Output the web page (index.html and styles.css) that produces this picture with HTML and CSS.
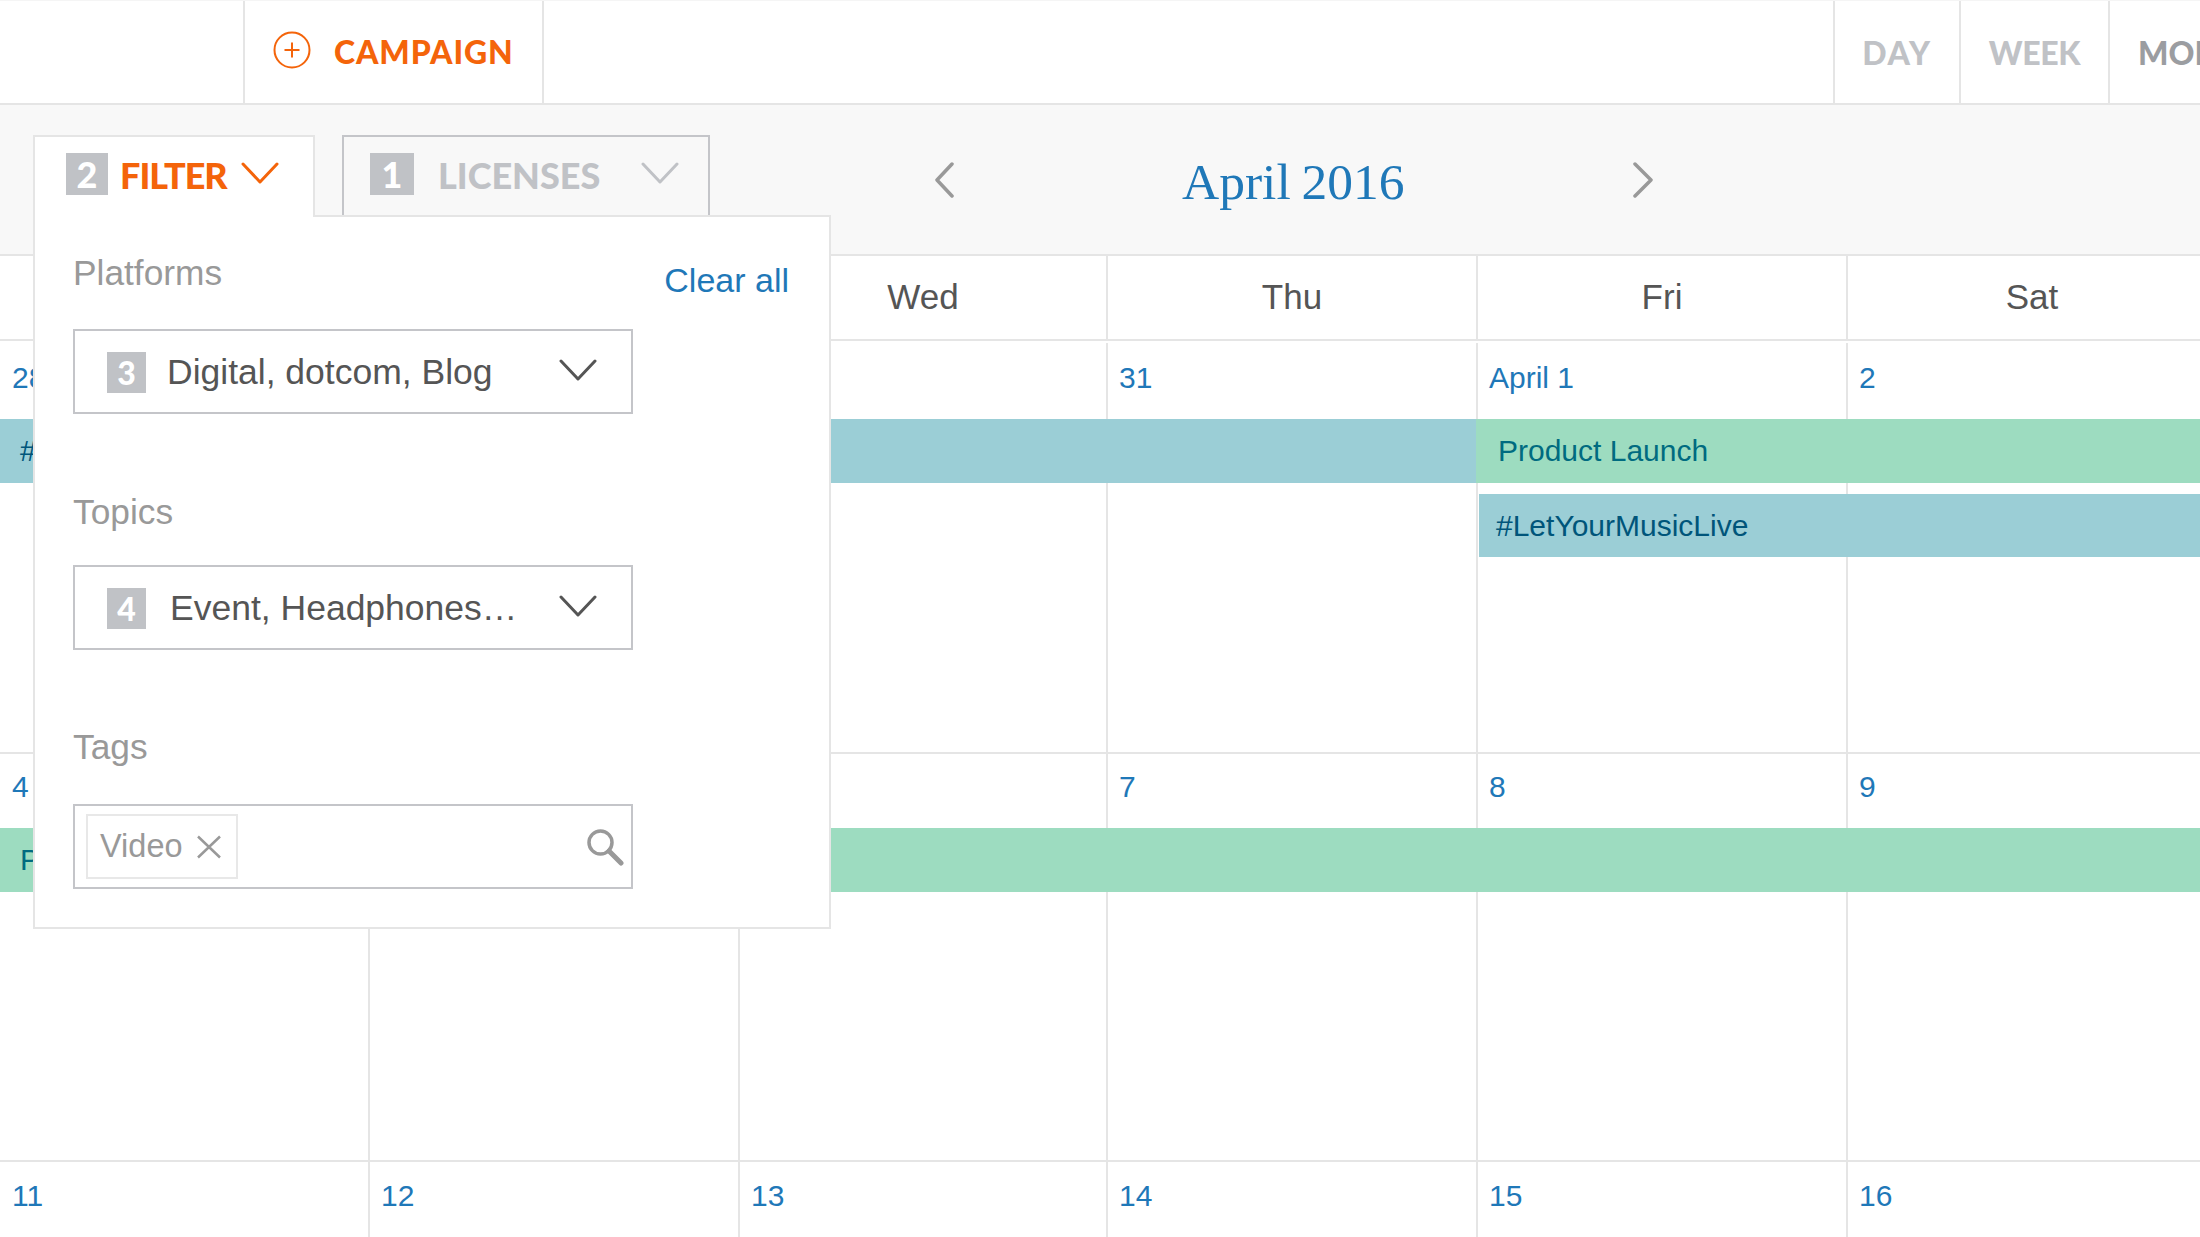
FILE: index.html
```html
<!DOCTYPE html>
<html lang="en">
<head>
<meta charset="utf-8">
<title>Calendar</title>
<link rel="stylesheet" href="styles.css">
</head>
<body>
<div class="app">
  <header class="topbar">
    <div class="brand-space"></div>
    <a class="campaign">
      <svg class="plus" viewBox="0 0 38 38" width="38" height="38"><circle cx="19" cy="19" r="17.5"/><path d="M19 11.5v15M11.5 19h15"/></svg>
      <span>CAMPAIGN</span>
    </a>
    <nav class="views">
      <a class="view view-day">DAY</a>
      <a class="view view-week">WEEK</a>
      <a class="view view-month">MONTH</a>
    </nav>
  </header>

  <section class="toolbar">
    <div class="tab tab-filter">
      <span class="badge">2</span>
      <span class="tab-label">FILTER</span>
      <svg class="chev chev-orange" viewBox="0 0 38 22" width="38" height="22"><path d="M2 2l17 18L36 2"/></svg>
    </div>
    <div class="tab tab-licenses">
      <span class="badge badge-wide">1</span>
      <span class="tab-label">LICENSES</span>
      <svg class="chev chev-grey" viewBox="0 0 38 22" width="38" height="22"><path d="M2 2l17 18L36 2"/></svg>
    </div>
    <div class="month-nav">
      <svg class="arrow" viewBox="0 0 20 36" width="20" height="36"><path d="M18 2L3 18l15 16"/></svg>
      <h1 class="month">April 2016</h1>
      <svg class="arrow" viewBox="0 0 20 36" width="20" height="36"><path d="M2 2l16 16L2 34"/></svg>
    </div>
  </section>

  <div class="dow-row">
    <div class="dow"></div><div class="dow"></div><div class="dow">Wed</div><div class="dow">Thu</div><div class="dow">Fri</div><div class="dow">Sat</div>
  </div>

  <div class="week week-one">
    <div class="cell c1"><span class="date">28</span></div>
    <div class="cell c2"></div>
    <div class="cell c3"></div>
    <div class="cell c4"><span class="date">31</span></div>
    <div class="cell c5"><span class="date">April 1</span></div>
    <div class="cell c6"><span class="date">2</span></div>
    <div class="event teal ev-a">#</div>
    <div class="event green ev-b">Product Launch</div>
    <div class="event teal ev-c">#LetYourMusicLive</div>
  </div>

  <div class="week week-two">
    <div class="cell c1"><span class="date">4</span></div>
    <div class="cell c2"></div>
    <div class="cell c3"></div>
    <div class="cell c4"><span class="date">7</span></div>
    <div class="cell c5"><span class="date">8</span></div>
    <div class="cell c6"><span class="date">9</span></div>
    <div class="event green ev-d">P</div>
  </div>

  <div class="week week-three">
    <div class="cell c1"><span class="date">11</span></div>
    <div class="cell c2"><span class="date">12</span></div>
    <div class="cell c3"><span class="date">13</span></div>
    <div class="cell c4"><span class="date">14</span></div>
    <div class="cell c5"><span class="date">15</span></div>
    <div class="cell c6"><span class="date">16</span></div>
  </div>

  <aside class="panel">
    <div class="field-head">
      <label class="field-label">Platforms</label>
      <a class="clear">Clear all</a>
    </div>
    <div class="control select">
      <span class="badge badge-small">3</span>
      <span class="select-text">Digital, dotcom, Blog</span>
      <svg class="chev chev-dark" viewBox="0 0 38 22" width="38" height="22"><path d="M2 2l17 18L36 2"/></svg>
    </div>
    <label class="field-label label-topics">Topics</label>
    <div class="control select">
      <span class="badge badge-small">4</span>
      <span class="select-text select-text-b">Event, Headphones…</span>
      <svg class="chev chev-dark" viewBox="0 0 38 22" width="38" height="22"><path d="M2 2l17 18L36 2"/></svg>
    </div>
    <label class="field-label label-tags">Tags</label>
    <div class="control tags">
      <span class="chip">Video
        <svg class="chip-x" viewBox="0 0 26 24" width="26" height="24"><path d="M2 1.5l22 21M24 1.5l-22 21"/></svg>
      </span>
      <svg class="search" viewBox="0 0 38 38" width="38" height="38"><circle cx="14.5" cy="14.5" r="11.5"/><path class="handle" d="M23 23l12 12"/></svg>
    </div>
  </aside>
</div>
</body>
</html>
```

FILE: styles.css
```css
* { box-sizing: border-box; }
html, body { margin: 0; padding: 0; background: #fff; }
body { font-family: "Liberation Sans", Arial, sans-serif; color: #555; }

.app { position: relative; width: 2200px; height: 1237px; overflow: hidden; background: #fff; }

/* top bar */
.topbar { display: flex; height: 105px; border-bottom: 2px solid #e5e5e5; border-top: 1px solid #f5f5f5; }
.brand-space { width: 243px; }
.campaign { display: flex; align-items: center; gap: 23px; width: 301px; padding-left: 28px; padding-bottom: 2px; border-left: 2px solid #e5e5e5; border-right: 2px solid #e5e5e5; color: #f4640a; font: 900 32px "Lato", sans-serif; letter-spacing: 0.9px; }
.plus { fill: none; stroke: #f4640a; stroke-width: 2; margin-bottom: 2px; }
.views { display: flex; margin-left: auto; }
.view { display: flex; align-items: center; justify-content: center; font: 900 32px "Lato", sans-serif; color: #c0c2c6; border-left: 2px solid #e5e5e5; }
.view-day { width: 126px; letter-spacing: 1.6px; }
.view-week { width: 149px; letter-spacing: -0.3px; }
.view-month { width: 92px; justify-content: flex-start; padding-left: 28px; color: #9b9da1; overflow: hidden; }

/* toolbar */
.toolbar { display: flex; align-items: flex-start; height: 151px; padding: 30px 0 0 33px; background: #f8f8f8; border-bottom: 2px solid #e5e5e5; }
.tab { position: relative; display: flex; align-items: flex-start; height: 80px; padding-top: 16px; border: 2px solid #e5e5e5; border-bottom: 0; }
.tab-filter { z-index: 3; width: 282px; height: 82px; padding-left: 31px; background: #fff; }
.tab-licenses { width: 368px; margin-left: 27px; padding-left: 26px; border-color: #c4c5c9; }
.badge { display: flex; align-items: center; justify-content: center; flex: none; width: 42px; height: 42px; background: #c0c2c6; color: #fff; font: 900 36px "Lato", sans-serif; }
.badge-wide { width: 44px; }
.tab-label { font: 900 36px/44px "Lato", sans-serif; }
.tab-filter .tab-label { margin-left: 12px; color: #f4640a; letter-spacing: -1px; }
.tab-licenses .tab-label { margin-left: 24px; width: 203px; color: #c0c2c6; }
.chev { flex: none; fill: none; stroke-linecap: round; stroke-linejoin: round; stroke-width: 3; }
.chev-orange { stroke: #f4640a; margin-left: 14px; margin-top: 9px; }
.chev-grey { stroke: #c0c2c6; margin-top: 9px; }
.chev-dark { stroke: #555; margin-left: auto; }

.month-nav { display: flex; align-items: flex-start; gap: 228px; margin-left: 224px; margin-top: 18px; }
.month { margin: 0; font: 400 51.5px/58px "Liberation Serif", serif; word-spacing: -2px; color: #1f78b8; white-space: nowrap; }
.arrow { flex: none; margin-top: 9px; fill: none; stroke: #999; stroke-width: 3.5; stroke-linecap: round; stroke-linejoin: round; }

/* calendar */
.dow-row, .week { display: grid; grid-template-columns: 368px 370px 368px 370px 370px 370px; width: 2216px; }
.dow-row { height: 85px; border-bottom: 2px solid #e5e5e5; }
.dow { display: flex; align-items: center; justify-content: center; padding-bottom: 2px; font-size: 35px; border-left: 2px solid #e5e5e5; }
.dow:first-child { border-left: 0; }

.week { border-bottom: 2px solid #e5e5e5; }
.week-one { height: 413px; grid-template-rows: 78px 64px 11px 63px 1fr; }
.week-two { height: 408px; grid-template-rows: 74px 64px 1fr; }
.week-three { height: 76px; border-bottom: 0; grid-template-rows: 1fr; }

.cell { grid-row: 1 / -1; padding: 16px 0 0 11px; border-left: 2px solid #e5e5e5; }
.c1 { grid-column: 1; border-left: 0; padding-left: 12px; }
.c2 { grid-column: 2; }
.c3 { grid-column: 3; }
.c4 { grid-column: 4; }
.c5 { grid-column: 5; }
.c6 { grid-column: 6; }
.week-one .cell { margin-top: 2px; padding-top: 18px; }
.week-three .cell { padding-top: 17px; }
.date { display: block; font-size: 30px; line-height: 34px; color: #1f78b8; }

.event { display: flex; align-items: center; font-size: 30px; z-index: 1; }
.teal { background: #9bced6; color: #00557a; }
.green { background: #9ddcc0; color: #006b80; }
.ev-a { grid-row: 2; grid-column: 1 / 5; padding-left: 20px; }
.ev-b { grid-row: 2; grid-column: 5 / 7; padding-left: 22px; }
.ev-c { grid-row: 4; grid-column: 5 / 7; margin-left: 3px; padding-left: 17px; }
.ev-d { grid-row: 2; grid-column: 1 / 7; padding-left: 20px; }

/* filter panel */
.panel { position: absolute; z-index: 2; left: 33px; top: 215px; width: 798px; height: 714px; padding: 36px 0 0 38px; background: #fff; border: 2px solid #e5e5e5; }
.field-head { display: flex; width: 716px; justify-content: space-between; }
.field-label { display: block; font-size: 35.3px; line-height: 40px; color: #999; }
.clear { margin-top: 7px; margin-bottom: -7px; font-size: 34px; line-height: 40px; color: #1f78b8; }
.control { display: flex; align-items: center; width: 560px; height: 85px; background: #fff; border: 2px solid #c4c5c9; }
.field-head + .control { margin-top: 36px; }
.label-topics { margin-top: 78px; margin-bottom: 33px; }
.label-tags { margin-top: 77px; margin-bottom: 37px; }
.select { padding: 0 34px 3px 32px; }
.badge-small { width: 39px; height: 41px; font-size: 32px; margin-top: 4px; }
.select-text { margin-top: 4px; margin-left: 21px; font-size: 35.5px; line-height: 40px; color: #555; }
.select-text-b { margin-left: 24px; }
.tags { padding-left: 11px; padding-right: 7px; justify-content: space-between; }
.chip { display: flex; align-items: center; height: 65px; width: 152px; padding-left: 12px; gap: 13px; font-size: 32.5px; color: #999; border: 2px solid #e8e8e8; }
.chip-x { fill: none; stroke: #999; stroke-width: 2.5; }
.search { fill: none; stroke: #999; stroke-width: 3.5; filter: blur(0.6px); }
.handle { stroke-width: 5; stroke-linecap: round; }
```
